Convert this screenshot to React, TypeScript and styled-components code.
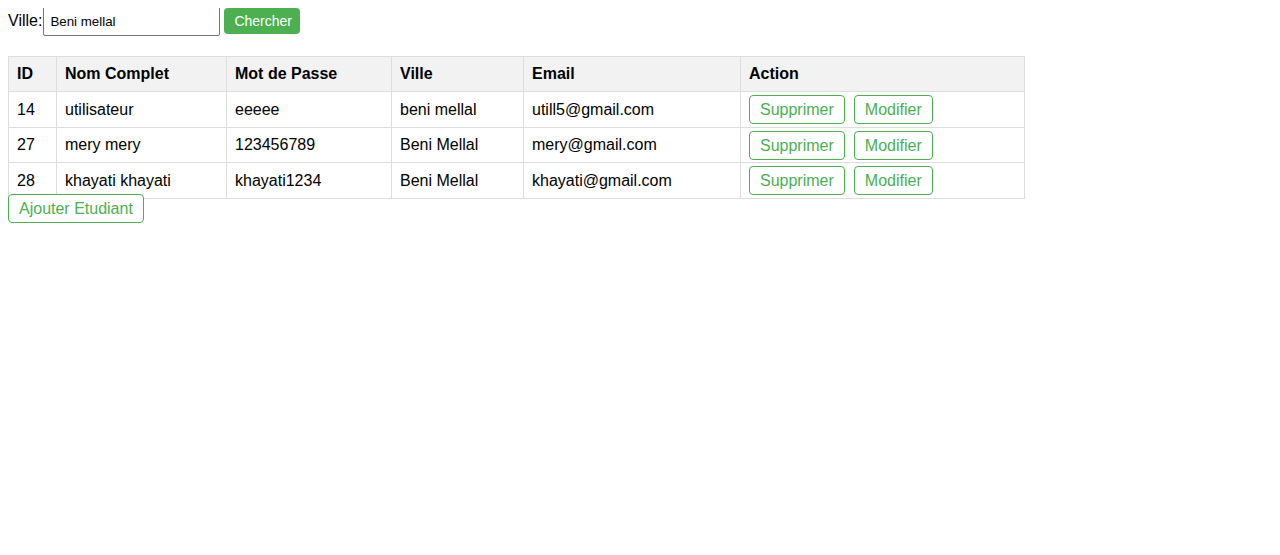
import React from "react";
import styled, { createGlobalStyle } from "styled-components";

const GlobalStyle = createGlobalStyle`
  body {
    margin: 8px;
    background: #fff;
    font-family: "Liberation Sans", Arial, sans-serif;
    font-size: 16px;
    color: #000;
  }
`;

const SearchForm = styled.form`
  display: flex;
  align-items: center;
  margin: -2px 0 20px;
  height: 30px;
`;

const Label = styled.label`
  font-size: 16px;
  margin-right: 1px;
`;

const Input = styled.input`
  box-sizing: border-box;
  width: 177px;
  height: 30px;
  padding: 0 6px;
  border: 1px solid #767676;
  border-radius: 2px;
  font-family: "Liberation Sans", Arial, sans-serif;
  font-size: 13.33px;
  color: #000;
  outline: none;
`;

const SearchButton = styled.button`
  box-sizing: border-box;
  margin-left: 4px;
  width: 76px;
  height: 26px;
  padding: 0 10px;
  border: none;
  border-radius: 4px;
  background: #4caf50;
  color: #fff;
  font-family: "Liberation Sans", Arial, sans-serif;
  font-size: 14px;
  cursor: pointer;
`;

const Table = styled.table`
  width: 1016px;
  table-layout: fixed;
  border-collapse: collapse;
`;

const Th = styled.th`
  height: 34px;
  padding: 0 8px;
  border: 1px solid #ddd;
  background: #f2f2f2;
  text-align: left;
  font-weight: bold;
  font-size: 16px;
`;

const Td = styled.td`
  height: 33.5px;
  padding: 1px 8px 0;
  border: 1px solid #ddd;
  text-align: left;
  vertical-align: middle;
  font-size: 16px;
`;

const Actions = styled.div`
  display: flex;
  gap: 9px;
`;

const OutlineButton = styled.button`
  box-sizing: border-box;
  height: 29px;
  padding: 0 10px;
  border: 1px solid #4caf50;
  border-radius: 4px;
  background: #fff;
  color: #4caf50;
  font-family: "Liberation Sans", Arial, sans-serif;
  font-size: 16px;
  line-height: 27px;
  cursor: pointer;
`;

const AddButton = styled(OutlineButton)`
  display: block;
  margin-top: -5px;
  position: relative;
`;

const widths = [48, 170, 165, 132, 217, 284];
const headers = ["ID", "Nom Complet", "Mot de Passe", "Ville", "Email", "Action"];

const rows = [
  { id: 14, nom: "utilisateur", mdp: "eeeee", ville: "beni mellal", email: "utill5@gmail.com" },
  { id: 27, nom: "mery mery", mdp: "123456789", ville: "Beni Mellal", email: "mery@gmail.com" },
  { id: 28, nom: "khayati khayati", mdp: "khayati1234", ville: "Beni Mellal", email: "khayati@gmail.com" },
];

export default function App() {
  return (
    <>
      <GlobalStyle />
      <SearchForm onSubmit={(e) => e.preventDefault()}>
        <Label>Ville:</Label>
        <Input defaultValue="Beni mellal" />
        <SearchButton type="submit">Chercher</SearchButton>
      </SearchForm>
      <Table>
        <colgroup>
          {widths.map((w, i) => (
            <col key={i} style={{ width: w }} />
          ))}
        </colgroup>
        <thead>
          <tr>
            {headers.map((h) => (
              <Th key={h}>{h}</Th>
            ))}
          </tr>
        </thead>
        <tbody>
          {rows.map((r) => (
            <tr key={r.id}>
              <Td>{r.id}</Td>
              <Td>{r.nom}</Td>
              <Td>{r.mdp}</Td>
              <Td>{r.ville}</Td>
              <Td>{r.email}</Td>
              <Td>
                <Actions>
                  <OutlineButton>Supprimer</OutlineButton>
                  <OutlineButton>Modifier</OutlineButton>
                </Actions>
              </Td>
            </tr>
          ))}
        </tbody>
      </Table>
      <AddButton>Ajouter Etudiant</AddButton>
    </>
  );
}
